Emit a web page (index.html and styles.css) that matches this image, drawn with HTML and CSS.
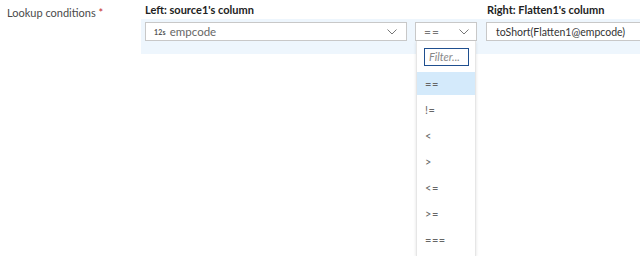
FILE: index.html
```html
<!DOCTYPE html>
<html>
<head>
<meta charset="utf-8">
<link rel="stylesheet" href="styles.css">
</head>
<body>
<div class="page">
  <div class="label">Lookup conditions <span class="req">*</span></div>
  <div class="cond">
    <div class="heads">
      <div class="head head-left">Left: source1's column</div>
      <div class="head head-right">Right: Flatten1's column</div>
    </div>
    <div class="band">
      <div class="field field-left">
        <span class="type">12s</span>
        <span class="val">empcode</span>
        <svg class="chev" width="10" height="6" viewBox="0 0 10 6"><path d="M0.5 0.5 L5 5 L9.5 0.5" fill="none" stroke="#777" stroke-width="1"/></svg>
      </div>
      <div class="field field-op">
        <span class="op">==</span>
        <svg class="chev" width="10" height="6" viewBox="0 0 10 6"><path d="M0.5 0.5 L5 5 L9.5 0.5" fill="none" stroke="#777" stroke-width="1"/></svg>
        <div class="menu">
          <div class="filter">Filter...</div>
          <div class="item active">==</div>
          <div class="item">!=</div>
          <div class="item">&lt;</div>
          <div class="item">&gt;</div>
          <div class="item">&lt;=</div>
          <div class="item">&gt;=</div>
          <div class="item">===</div>
        </div>
      </div>
      <div class="field field-right">
        <span class="val dark">toShort(Flatten1@empcode)</span>
      </div>
    </div>
  </div>
</div>
</body>
</html>
```

FILE: styles.css
```css
html, body {
  margin: 0;
  padding: 0;
  background: #fff;
  overflow: hidden;
}
body {
  width: 640px;
  height: 256px;
  font-family: "Lato", "Open Sans", sans-serif;
  font-size: 12px;
  color: #444;
}
.page {
  display: flex;
  align-items: flex-start;
}
.label {
  width: 134px;
  padding: 5px 0 0 7px;
  flex: none;
  color: #4a4a4a;
  line-height: 16px;
  font-size: 11px;
}
.req {
  color: #c4262e;
}
.cond {
  flex: 1;
  min-width: 0;
}
.heads {
  display: flex;
  height: 19px;
  align-items: flex-start;
  padding-top: 3px;
  box-sizing: border-box;
  font-weight: 700;
  color: #222;
  line-height: 14px;
  font-size: 11px;
}
.head-left {
  margin-left: 4px;
  width: 342px;
}
.band {
  display: flex;
  background: #eef6fd;
  padding: 3px 0 13px 4px;
  gap: 8px;
}
.field {
  box-sizing: border-box;
  height: 19px;
  border: 1px solid #c8c8c8;
  background: #fff;
  display: flex;
  align-items: center;
  position: relative;
  flex: none;
}
.field-left {
  width: 262px;
  padding: 0 9px 0 8px;
}
.field-op {
  width: 62px;
  padding: 0 7px 0 8px;
}
.field-right {
  flex: 1;
  margin-left: 1px;
  padding: 0 9px;
  border-right: none;
}
.type {
  font-size: 7px;
  font-weight: 700;
  color: #555;
  margin-right: 4px;
  letter-spacing: 0.2px;
}
.val {
  color: #666;
  flex: 1;
  font-size: 11.5px;
}
.val.dark {
  color: #333;
  font-size: 10.5px;
  white-space: nowrap;
}
.op {
  color: #777;
  flex: 1;
  letter-spacing: 1px;
}
.chev {
  flex: none;
}
.menu {
  position: absolute;
  top: 18px;
  left: 0;
  width: 60px;
  height: 215px;
  background: #fff;
  border: 1px solid #e6e6e6;
  border-top: none;
  border-bottom: none;
  box-shadow: 0 1px 3px rgba(0,0,0,0.12);
  display: flex;
  flex-direction: column;
  padding-top: 7px;
  box-sizing: border-box;
  overflow: hidden;
}
.filter {
  flex: none;
  margin: 0 6px 0 7px;
  height: 18px;
  border: 1px solid #1f4f8f;
  box-sizing: border-box;
  font-style: italic;
  color: #888;
  font-size: 11px;
  line-height: 16px;
  padding-left: 4px;
  margin-bottom: 6px;
}
.item {
  flex: none;
  height: 26px;
  line-height: 24px;
  padding-left: 8px;
  color: #666;
  font-size: 11px;
  letter-spacing: 0.5px;
}
.item.active {
  background: #d4eafb;
  height: 23px;
  line-height: 24px;
  margin-bottom: 3px;
}
```
